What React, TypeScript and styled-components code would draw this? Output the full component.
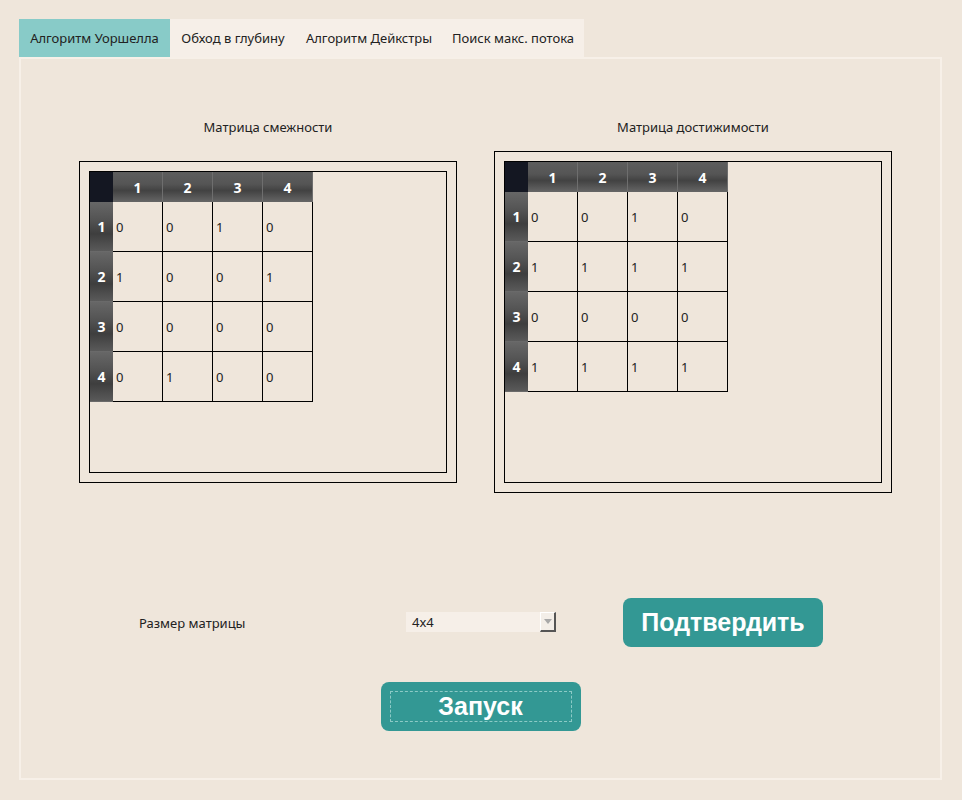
import styled, { createGlobalStyle } from 'styled-components'

const GlobalStyle = createGlobalStyle`
  html, body {
    margin: 0;
    padding: 0;
    background: #efe6db;
  }
  body {
    font-family: 'Noto Sans', 'Open Sans', sans-serif;
    font-size: 13px;
    color: #222;
  }
`

const Page = styled.div`
  width: 962px;
  height: 800px;
  box-sizing: border-box;
  padding: 19px 20px 0 19px;
`

const TabBar = styled.div`
  display: flex;
  height: 38px;
`

const Tab = styled.div<{ $active?: boolean; $w: number }>`
  display: flex;
  align-items: center;
  justify-content: center;
  width: ${p => p.$w}px;
  background: ${p => (p.$active ? '#88cbc8' : '#f6efe8')};
  color: #222;
  white-space: nowrap;
`

const Pane = styled.div`
  width: 923px;
  height: 723px;
  box-sizing: border-box;
  border: 2px solid #f7f0e8;
  padding: 59px 0 0 0;
  display: flex;
  flex-direction: column;
`

const GroupsRow = styled.div`
  display: flex;
  padding-left: 58px;
  gap: 37px;
`

const Group = styled.div<{ $w: number }>`
  width: ${p => p.$w}px;
  display: flex;
  flex-direction: column;
  align-items: center;
`

const GroupTitle = styled.div`
  height: 18px;
  line-height: 18px;
  margin-bottom: 15px;
`

const BoxArea = styled.div`
  height: 342px;
  width: 100%;
  display: flex;
  align-items: center;
`

const OuterBox = styled.div<{ $h: number }>`
  width: 100%;
  height: ${p => p.$h}px;
  box-sizing: border-box;
  border: 1px solid #000;
  padding: 9px;
`

const InnerBox = styled.div`
  width: 100%;
  height: 100%;
  box-sizing: border-box;
  border: 1px solid #000;
`

const Table = styled.div`
  display: grid;
  grid-template-columns: 23px repeat(4, 50px);
  grid-template-rows: 30px repeat(4, 50px);
`

const Corner = styled.div`
  background: #141722;
`

const ColHead = styled.div`
  display: flex;
  align-items: center;
  justify-content: center;
  color: #fff;
  font-weight: bold;
  font-size: 14px;
  background: linear-gradient(#5d5d5d 0%, #555 40%, #424242 62%, #666 100%);
  border-right: 1px solid #6e6e6e;
  box-sizing: border-box;
`

const RowHead = styled.div`
  display: flex;
  align-items: center;
  justify-content: center;
  color: #fff;
  font-weight: bold;
  font-size: 14px;
  background: linear-gradient(#676767 0%, #545454 35%, #3e3e3e 65%, #5a5a5a 100%);
  border-bottom: 1px solid #6a6a6a;
  box-sizing: border-box;
`

const Cell = styled.div`
  display: flex;
  align-items: center;
  padding-left: 3px;
  border-right: 1px solid #000;
  border-bottom: 1px solid #000;
  box-sizing: border-box;
  color: #222;
`

const ControlsRow = styled.div`
  display: flex;
  align-items: center;
  margin-top: 105px;
  padding-left: 118px;
`

const SizeLabel = styled.div`
  width: 267px;
`

const Combo = styled.div`
  width: 150px;
  height: 20px;
  margin-top: -2px;
  background: #f6efe8;
  display: flex;
  align-items: center;
  justify-content: space-between;
  padding-left: 6px;
  box-sizing: border-box;
`

const ComboArrow = styled.div`
  width: 16px;
  height: 20px;
  box-sizing: border-box;
  background: #f3eee8;
  border-top: 1px solid #fff;
  border-left: 1px solid #fff;
  border-right: 2px solid #555;
  border-bottom: 2px solid #555;
  display: flex;
  align-items: center;
  justify-content: center;

  &::after {
    content: '';
    border-left: 4px solid transparent;
    border-right: 4px solid transparent;
    border-top: 5px solid #a8a8a8;
  }
`

const Button = styled.div`
  width: 200px;
  height: 49px;
  border-radius: 8px;
  background: #339894;
  color: #fff;
  font-family: 'Liberation Sans', Arial, sans-serif;
  font-weight: bold;
  font-size: 25px;
  display: flex;
  align-items: center;
  justify-content: center;
  box-sizing: border-box;
`

const ConfirmButton = styled(Button)`
  margin-left: 67px;
`

const RunRow = styled.div`
  display: flex;
  justify-content: center;
  margin-top: 35px;
`

const FocusRect = styled.div`
  width: 180px;
  height: 29px;
  border: 1px dashed #8ccac6;
  display: flex;
  align-items: center;
  justify-content: center;
`

const adjacency = [
  [0, 0, 1, 0],
  [1, 0, 0, 1],
  [0, 0, 0, 0],
  [0, 1, 0, 0],
]

const reach = [
  [0, 0, 1, 0],
  [1, 1, 1, 1],
  [0, 0, 0, 0],
  [1, 1, 1, 1],
]

const Matrix = ({ data }: { data: number[][] }) => (
  <Table>
    <Corner />
    {[1, 2, 3, 4].map(n => (
      <ColHead key={'c' + n}>{n}</ColHead>
    ))}
    {data.map((row, i) => [
      <RowHead key={'r' + i}>{i + 1}</RowHead>,
      ...row.map((v, j) => <Cell key={i + '-' + j}>{v}</Cell>),
    ])}
  </Table>
)

const App = () => {
  return (
    <>
      <GlobalStyle />
      <Page>
        <TabBar>
          <Tab $active $w={151}>Алгоритм Уоршелла</Tab>
          <Tab $w={126}>Обход в глубину</Tab>
          <Tab $w={146}>Алгоритм Дейкстры</Tab>
          <Tab $w={142}>Поиск макс. потока</Tab>
        </TabBar>
        <Pane>
          <GroupsRow>
            <Group $w={378}>
              <GroupTitle>Матрица смежности</GroupTitle>
              <BoxArea>
                <OuterBox $h={322}>
                  <InnerBox>
                    <Matrix data={adjacency} />
                  </InnerBox>
                </OuterBox>
              </BoxArea>
            </Group>
            <Group $w={398}>
              <GroupTitle>Матрица достижимости</GroupTitle>
              <BoxArea>
                <OuterBox $h={342}>
                  <InnerBox>
                    <Matrix data={reach} />
                  </InnerBox>
                </OuterBox>
              </BoxArea>
            </Group>
          </GroupsRow>
          <ControlsRow>
            <SizeLabel>Размер матрицы</SizeLabel>
            <Combo>
              4x4
              <ComboArrow />
            </Combo>
            <ConfirmButton>Подтвердить</ConfirmButton>
          </ControlsRow>
          <RunRow>
            <Button>
              <FocusRect>Запуск</FocusRect>
            </Button>
          </RunRow>
        </Pane>
      </Page>
    </>
  )
}

export default App
